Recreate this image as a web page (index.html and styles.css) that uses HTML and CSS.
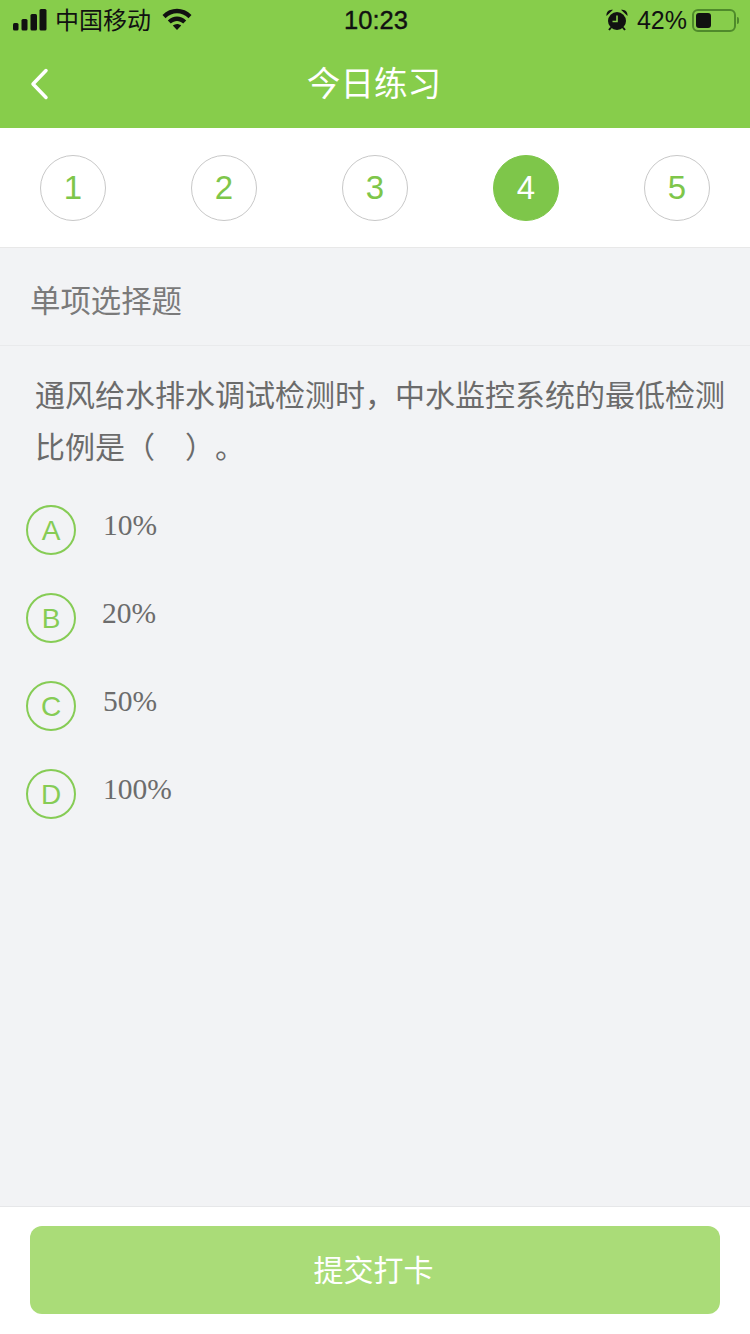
FILE: index.html
```html
<!DOCTYPE html>
<html lang="zh-CN">
<head>
  <meta charset="UTF-8">
  <meta name="viewport" content="width=device-width, initial-scale=1.0">
  <title>今日练习</title>
  <link rel="stylesheet" href="styles.css">
</head>
<body>
  <div class="page">
    <!-- Status bar -->
    <div class="status">
      <div class="status-left">
        <svg class="signal" width="34" height="22" viewBox="0 0 34 22">
          <rect x="0" y="14" width="5.500" height="7.500" rx="1.500"/>
          <rect x="8.500" y="10" width="6" height="11.500" rx="1.500"/>
          <rect x="17.500" y="5" width="6.500" height="16.500" rx="1.500"/>
          <rect x="26.500" y="0" width="7" height="21.500" rx="1.500"/>
        </svg>
        <span class="carrier">中国移动</span>
        <svg class="wifi" width="30" height="22" viewBox="0 0 30 22">
          <path d="M.5 7C8.500-1.500 21.500-1.500 29.500 7l-3 3.200C19.800 3.600 10.200 3.600 3.500 10.200z"/>
          <path d="M5.800 12.500C11.200 7.300 18.800 7.300 24.200 12.500l-3 3.100C17.500 12 12.500 12 8.800 15.600z"/>
          <path d="M10.800 17.500c2.600-2 5.800-2 8.400 0L15 22z"/>
        </svg>
      </div>
      <span class="time">10:23</span>
      <div class="status-right">
        <svg class="alarm" width="22" height="22" viewBox="0 0 22 22">
          <circle cx="11" cy="12" r="9"/>
          <path d="M0.500 7C0 3 3 0 7 .8zM21.500 7C22 3 19 0 15 .8z"/>
          <path d="M5 18.500l-2 2.500M17 18.500l2 2.500" class="alarm-feet"/>
          <path d="M11 6.500V12.500H6.500" class="alarm-hands"/>
        </svg>
        <span class="percent">42%</span>
        <div class="battery"><div class="battery-level"></div></div>
        <div class="battery-tip"></div>
      </div>
    </div>

    <!-- Nav bar -->
    <div class="nav">
      <svg class="back" width="20" height="32" viewBox="0 0 20 32">
        <path d="M16 2.500L3 16l13 13.500"/>
      </svg>
      <span class="nav-title">今日练习</span>
    </div>

    <!-- Question numbers -->
    <div class="steps">
      <div class="step">1</div>
      <div class="step">2</div>
      <div class="step">3</div>
      <div class="step active">4</div>
      <div class="step">5</div>
    </div>

    <div class="type">单项选择题</div>

    <div class="content">
      <p class="question">通风给水排水调试检测时，中水监控系统的最低检测比例是（　）。</p>
      <div class="options">
        <div class="option"><span class="letter">A</span><span class="answer">10%</span></div>
        <div class="option"><span class="letter">B</span><span class="answer answer-wide">20%</span></div>
        <div class="option"><span class="letter">C</span><span class="answer">50%</span></div>
        <div class="option"><span class="letter">D</span><span class="answer">100%</span></div>
      </div>
    </div>

    <div class="footer">
      <button class="submit">提交打卡</button>
    </div>
  </div>
</body>
</html>
```

FILE: styles.css
```css
* { box-sizing: border-box; }
html, body { margin: 0; padding: 0; }
body { font-family: "Liberation Sans", "Noto Sans CJK SC", sans-serif; background: #f2f3f5; }
.page { width: 750px; height: 1334px; display: flex; flex-direction: column; overflow: hidden; }

.status { height: 40px; padding: 0 11px 0 13px; background: #87cd4b; display: flex; align-items: center; justify-content: space-between; color: #111; font-size: 24px; }
.status-left { display: flex; align-items: center; width: 260px; }
.signal { fill: #111; }
.carrier { margin-left: 8px; padding-bottom: 4px; }
.wifi { fill: #111; margin-left: 11px; margin-bottom: 2px; }
.time { font-size: 25.500px; -webkit-text-stroke: 0.4px #111; }
.status-right { display: flex; align-items: center; width: 260px; justify-content: flex-end; }
.alarm { fill: #111; margin-bottom: 1px; }
.alarm-feet { stroke: #111; stroke-width: 2; fill: none; }
.alarm-hands { stroke: #87cd4b; stroke-width: 1.600; fill: none; }
.percent { font-size: 25px; margin-left: 9px; margin-right: 5px; }
.battery { width: 44px; height: 23px; border: 2px solid #4f8a2b; border-radius: 6px; padding: 2px; }
.battery-level { width: 15px; height: 15px; background: #111; border-radius: 3px; }
.battery-tip { width: 2px; height: 7px; background: #4f8a2b; margin-left: 1px; border-radius: 0 2px 2px 0; }

.nav { height: 88px; background: #87cd4b; display: flex; align-items: center; justify-content: center; position: relative; padding: 0 2px 5px 0; }
.back { position: absolute; left: 30px; top: 28px; fill: none; stroke: #fff; stroke-width: 3.500; stroke-linecap: round; stroke-linejoin: round; }
.nav-title { color: #fff; font-size: 33.600px; }

.steps { height: 120px; padding: 0 40px; background: #fff; border-bottom: 1px solid #e8e8e8; display: flex; justify-content: space-between; align-items: center; }
.step { width: 66px; height: 66px; border: 1px solid #c8c8c8; border-radius: 50%; color: #7ec64a; font-size: 33px; display: flex; align-items: center; justify-content: center; }
.step.active { background: #7ec64a; border-color: #7ec64a; color: #fff; }

.type { height: 98px; padding-left: 30px; padding-top: 5px; border-bottom: 1px solid #e9eaec; color: #7a7a7a; font-size: 30.400px; display: flex; align-items: center; }

.content { flex: 1; padding: 24px 20px 0 26px; }
.question { margin: 0 0 0 9px; color: #6b6b6b; font-size: 30px; line-height: 52px; text-spacing-trim: space-all; }
.options { margin-top: 31px; display: flex; flex-direction: column; gap: 38px; }
.option { height: 50px; display: flex; }
.letter { width: 50px; height: 50px; border: 2px solid #86cc55; border-radius: 50%; color: #86cc55; font-size: 28px; display: flex; align-items: center; justify-content: center; padding-top: 2px; flex-shrink: 0; }
.answer { margin-left: 27px; font-family: "Liberation Serif", serif; font-size: 29.500px; line-height: 40px; color: #6c6c6c; }
.answer-wide { margin-left: 26px; }

.footer { height: 128px; padding: 19px 30px 0; background: #fff; border-top: 1px solid #e6e7e9; }
.submit { display: block; width: 690px; height: 88px; border: none; border-radius: 12px; background: #aadc78; color: #fff; font-family: inherit; font-size: 30px; padding: 0 3px 4px 0; }
```
